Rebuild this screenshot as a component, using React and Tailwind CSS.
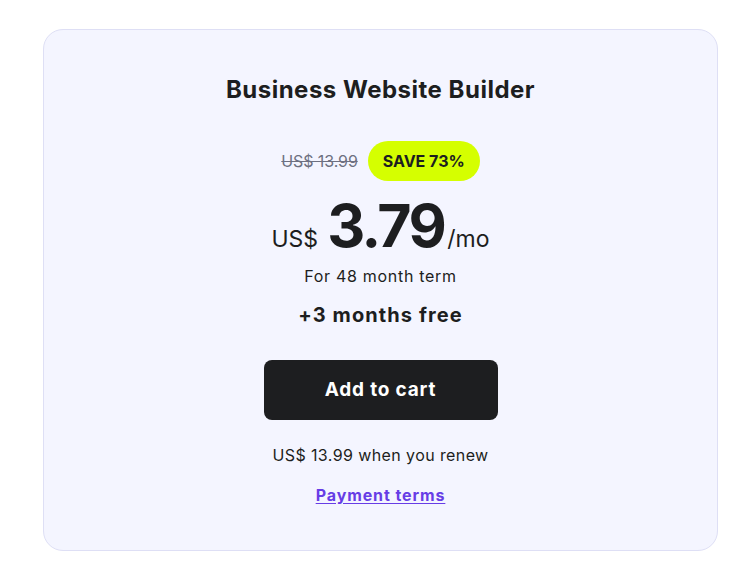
import React from 'react';

const App = () => {
  return (
    <div className="min-h-screen bg-white pt-[29px] pl-[43px]" style={{ fontFamily: 'Inter, "Noto Sans", sans-serif' }}>
      {/* Plan card */}
      <div className="w-[675px] h-[522px] rounded-[20px] border border-[#dedff5] bg-[#f4f5ff] flex flex-col items-center text-[#1d1e20]">
        <h2 className="mt-[44px] text-[24px] leading-[32px] font-bold tracking-[0.5px]">Business Website Builder</h2>

        <div className="mt-[35px] flex items-center gap-[10px]">
          <span className="text-[16px] text-[#6d7081] line-through tracking-[-0.1px]">US$ 13.99</span>
          <span className="h-[40px] px-[15px] rounded-full bg-[#d5ff00] flex items-center text-[16px] font-bold tracking-[0px]">SAVE 73%</span>
        </div>

        <div className="mt-[10px] flex items-baseline">
          <span className="text-[23px] font-normal">US$</span>
          <span className="ml-[9px] text-[59px] leading-[70px] font-bold tracking-[-2.5px]">3.79</span>
          <span className="ml-[3px] text-[23px]">/mo</span>
        </div>

        <p className="mt-[3px] text-[16px] leading-[24px] tracking-[0.7px]">For 48 month term</p>
        <p className="mt-[13px] text-[20px] leading-[28px] font-bold tracking-[1.1px]">+3 months free</p>

        <button className="mt-[31px] w-[234px] h-[60px] rounded-[8px] bg-[#1d1e20] text-white text-[19px] font-bold tracking-[0.8px]">
          Add to cart
        </button>

        <p className="mt-[23px] text-[16px] leading-[24px] tracking-[0.4px]">US$ 13.99 when you renew</p>
        <a href="#" className="mt-[16px] text-[16px] leading-[24px] font-bold tracking-[0.9px] text-[#673de6] underline underline-offset-2">Payment terms</a>
      </div>
    </div>
  );
};

export default App;
